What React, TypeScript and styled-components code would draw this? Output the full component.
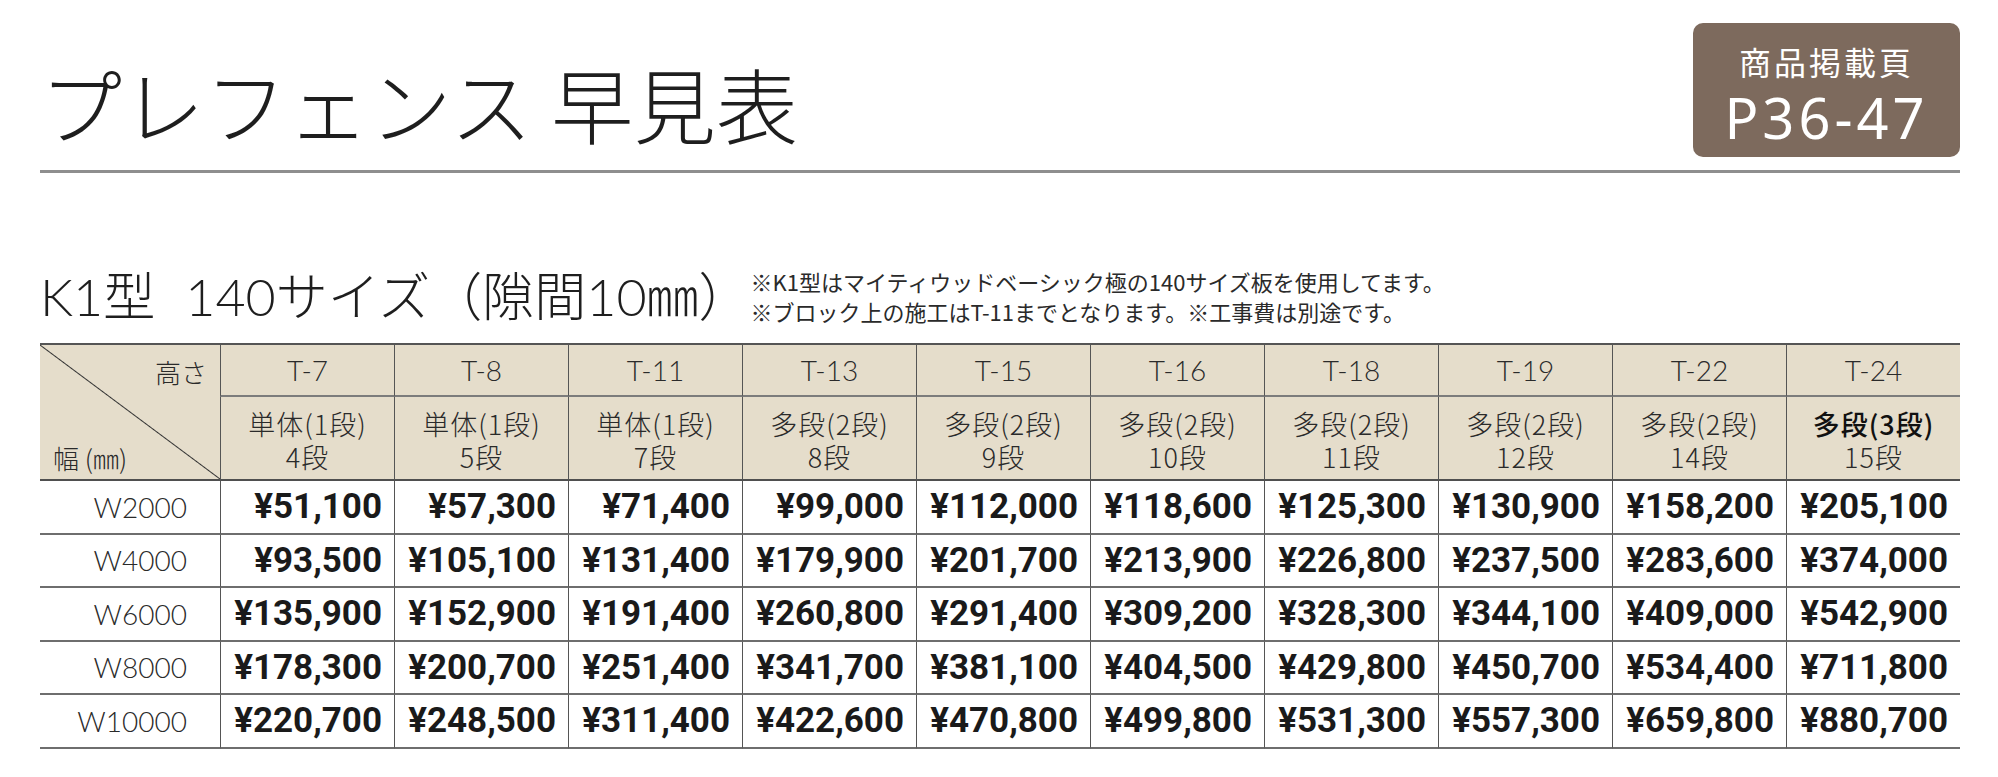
import React from 'react';
import styled, { createGlobalStyle } from 'styled-components';

const GlobalStyle = createGlobalStyle`
  html, body { margin: 0; padding: 0; background: #ffffff; }
  body { font-family: "Noto Sans CJK JP", sans-serif; color: #222; }
`;

const Page = styled.div`
  width: 1998px;
  box-sizing: border-box;
  padding: 0 38px 0 40px;
`;

const Header = styled.header`
  display: flex;
  justify-content: space-between;
  align-items: flex-start;
  height: 157px;
  padding-top: 23px;
  box-sizing: border-box;
`;

const Title = styled.h1`
  margin: 39px 0 0 0;
  font-family: "Noto Sans CJK JP", sans-serif;
  font-weight: 300;
  font-size: 82px;
  line-height: 1;
  letter-spacing: 0.4px;
  color: #1e1e1e;
`;

const Badge = styled.div`
  width: 267px;
  height: 134px;
  box-sizing: border-box;
  padding-top: 8px;
  border-radius: 10px;
  background: #7d6a5d;
  color: #ffffff;
  display: flex;
  flex-direction: column;
  align-items: center;
  justify-content: center;
  gap: 6px;
`;

const BadgeLabel = styled.div`
  font-family: "Noto Sans CJK JP", sans-serif;
  font-size: 32px;
  line-height: 40px;
  letter-spacing: 3px;
`;

const BadgePage = styled.div`
  font-family: "Noto Sans", sans-serif;
  font-size: 56px;
  line-height: 60px;
  letter-spacing: 4px;
`;

const Rule = styled.hr`
  margin: 13px 0 0 0;
  border: 0;
  height: 3px;
  background: #8e8e8e;
`;

const SubHeader = styled.div`
  display: flex;
  align-items: flex-end;
  gap: 0;
  margin-top: 93px;
`;

const Heading = styled.h2`
  margin: 0 0 4px 0;
  font-family: "Lato", "Noto Sans CJK JP", sans-serif;
  font-weight: 300;
  font-size: 52px;
  line-height: 52px;
  word-spacing: 16px;
  color: #1e1e1e;
  white-space: nowrap;
`;

const Notes = styled.div`
  font-family: "Noto Sans CJK JP", sans-serif;
  font-size: 22px;
  line-height: 30px;
  color: #2a2a2a;
`;

const Table = styled.table`
  margin-top: 17px;
  width: 1920px;
  table-layout: fixed;
  border-collapse: separate;
  border-spacing: 0;
  border-top: 2px solid #555555;
`;

const HeadRow = styled.tr<{ $h: number }>`
  height: ${(p) => p.$h}px;
`;

const HeadCell = styled.th<{ $line: 'light' | 'dark' }>`
  background: #e5ddcb;
  border-left: 1px solid #555555;
  border-bottom: 2px solid ${(p) => (p.$line === 'light' ? '#7c7c7c' : '#4f4f4f')};
  padding: 0;
  font-family: "Lato", "Noto Sans CJK JP", sans-serif;
  font-weight: 300;
  color: #2a2a2a;
  text-align: center;
  vertical-align: middle;
`;

const CodeText = styled.div`
  font-size: 28px;
  line-height: 34px;
`;

const StepText = styled.div`
  font-family: "Noto Sans CJK JP", sans-serif;
  font-size: 27px;
  line-height: 33px;
  letter-spacing: 1px;
  padding-top: 4px;
  font-weight: 300;
  color: #2a2a2a;
`;

const StepLine = styled.div<{ $strong?: boolean }>`
  font-weight: ${(p) => (p.$strong ? 500 : 300)};
  color: ${(p) => (p.$strong ? '#111111' : 'inherit')};
`;

const Corner = styled.th`
  background-color: #e5ddcb;
  background-image: linear-gradient(
    to top right,
    transparent calc(50% - 1px),
    #333333 50%,
    transparent calc(50% + 1px)
  );
  border-bottom: 2px solid #4f4f4f;
  padding: 0;
  font-family: "Noto Sans CJK JP", sans-serif;
  font-weight: 300;
  color: #2a2a2a;
`;

const CornerInner = styled.div`
  height: 134px;
  box-sizing: border-box;
  padding: 10px 13px 5px 13px;
  display: flex;
  flex-direction: column;
  justify-content: space-between;
  font-size: 26px;
  line-height: 33px;
`;

const CornerTop = styled.div`
  text-align: right;
`;

const CornerBottom = styled.div`
  text-align: left;
`;

const DataRow = styled.tr`
  height: 53.5px;
`;

const WidthCell = styled.td`
  border-bottom: 2px solid #6e6e6e;
  padding: 0 33px 0 0;
  text-align: right;
  vertical-align: middle;
  font-family: "Lato", "Noto Sans CJK JP", sans-serif;
  font-weight: 300;
  font-size: 28px;
  color: #2a2a2a;
`;

const PriceCell = styled.td`
  border-left: 1px solid #555555;
  border-bottom: 2px solid #6e6e6e;
  padding: 0 12px 0 0;
  text-align: right;
  vertical-align: middle;
  font-family: "Roboto", sans-serif;
  font-weight: 700;
  font-size: 35px;
  color: #1a1a1a;
  white-space: nowrap;
`;

type Col = { code: string; type: string; steps: string; strong?: boolean };

const columns: Col[] = [
  { code: 'T-7', type: '単体(1段)', steps: '4段' },
  { code: 'T-8', type: '単体(1段)', steps: '5段' },
  { code: 'T-11', type: '単体(1段)', steps: '7段' },
  { code: 'T-13', type: '多段(2段)', steps: '8段' },
  { code: 'T-15', type: '多段(2段)', steps: '9段' },
  { code: 'T-16', type: '多段(2段)', steps: '10段' },
  { code: 'T-18', type: '多段(2段)', steps: '11段' },
  { code: 'T-19', type: '多段(2段)', steps: '12段' },
  { code: 'T-22', type: '多段(2段)', steps: '14段' },
  { code: 'T-24', type: '多段(3段)', steps: '15段', strong: true },
];

const rows: { w: string; prices: string[] }[] = [
  { w: 'W2000', prices: ['51,100', '57,300', '71,400', '99,000', '112,000', '118,600', '125,300', '130,900', '158,200', '205,100'] },
  { w: 'W4000', prices: ['93,500', '105,100', '131,400', '179,900', '201,700', '213,900', '226,800', '237,500', '283,600', '374,000'] },
  { w: 'W6000', prices: ['135,900', '152,900', '191,400', '260,800', '291,400', '309,200', '328,300', '344,100', '409,000', '542,900'] },
  { w: 'W8000', prices: ['178,300', '200,700', '251,400', '341,700', '381,100', '404,500', '429,800', '450,700', '534,400', '711,800'] },
  { w: 'W10000', prices: ['220,700', '248,500', '311,400', '422,600', '470,800', '499,800', '531,300', '557,300', '659,800', '880,700'] },
];

export default function App() {
  return (
    <>
      <GlobalStyle />
      <Page>
        <Header>
          <Title>プレフェンス 早見表</Title>
          <Badge>
            <BadgeLabel>商品掲載頁</BadgeLabel>
            <BadgePage>P36-47</BadgePage>
          </Badge>
        </Header>
        <Rule />
        <SubHeader>
          <Heading>K1型 140サイズ（隙間10㎜）</Heading>
          <Notes>
            <div>※K1型はマイティウッドベーシック極の140サイズ板を使用してます。</div>
            <div>※ブロック上の施工はT-11までとなります。※工事費は別途です。</div>
          </Notes>
        </SubHeader>
        <Table>
          <colgroup>
            <col style={{ width: 180 }} />
            {columns.map((c) => (
              <col key={c.code} style={{ width: 174 }} />
            ))}
          </colgroup>
          <thead>
            <HeadRow $h={52}>
              <Corner rowSpan={2}>
                <CornerInner>
                  <CornerTop>高さ</CornerTop>
                  <CornerBottom>幅 (㎜)</CornerBottom>
                </CornerInner>
              </Corner>
              {columns.map((c) => (
                <HeadCell key={c.code} $line="light">
                  <CodeText>{c.code}</CodeText>
                </HeadCell>
              ))}
            </HeadRow>
            <HeadRow $h={84}>
              {columns.map((c) => (
                <HeadCell key={c.code} $line="dark">
                  <StepText>
                    <StepLine $strong={c.strong}>{c.type}</StepLine>
                    <StepLine>{c.steps}</StepLine>
                  </StepText>
                </HeadCell>
              ))}
            </HeadRow>
          </thead>
          <tbody>
            {rows.map((r) => (
              <DataRow key={r.w}>
                <WidthCell>{r.w}</WidthCell>
                {r.prices.map((p, i) => (
                  <PriceCell key={i}>¥{p}</PriceCell>
                ))}
              </DataRow>
            ))}
          </tbody>
        </Table>
      </Page>
    </>
  );
}
